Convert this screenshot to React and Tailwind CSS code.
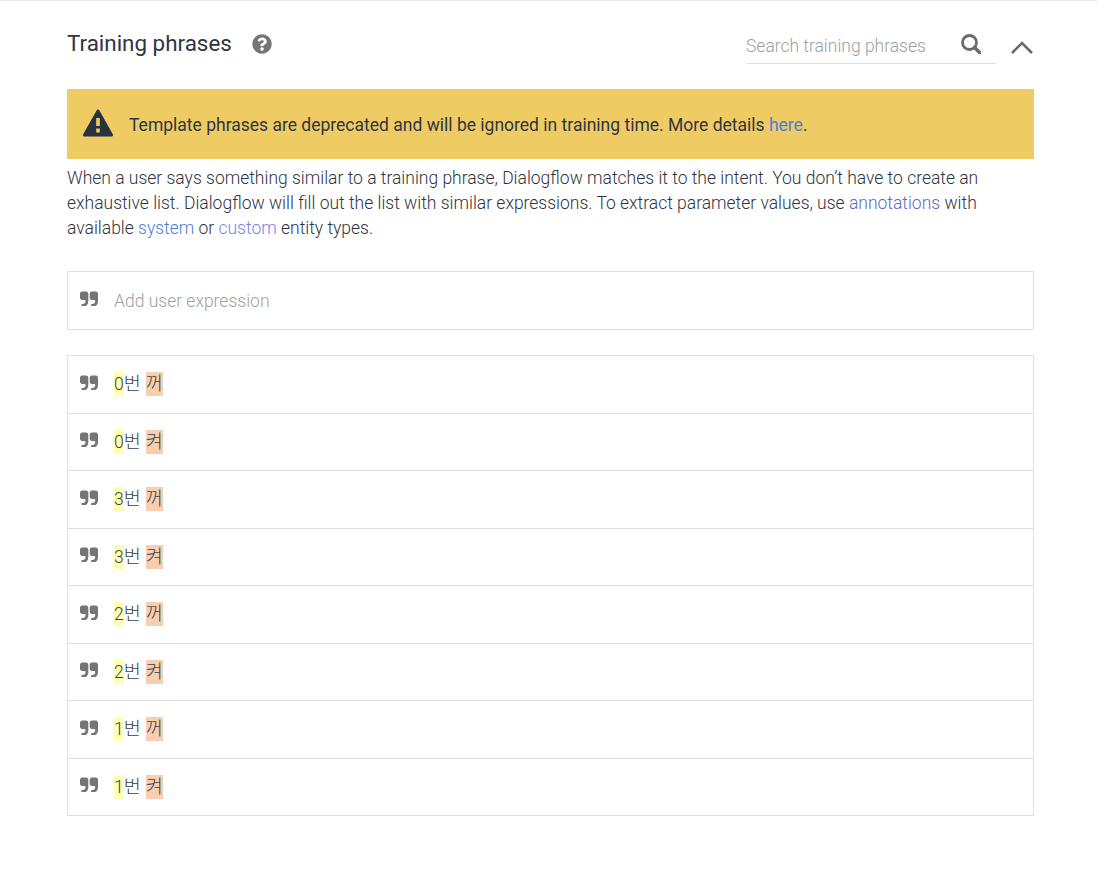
import React from 'react';
import { FaQuestionCircle } from 'react-icons/fa';

const phrases = [
    ['0', '꺼'],
    ['0', '켜'],
    ['3', '꺼'],
    ['3', '켜'],
    ['2', '꺼'],
    ['2', '켜'],
    ['1', '꺼'],
    ['1', '켜'],
];

const QuoteIcon = () => (
    <svg viewBox="0 0 1664 1280" className="w-[18px] h-[15px] -mt-[4px] text-[#757575] fill-current shrink-0">
        <path d="M768 192v704q0 104-40.5 198.5t-109.5 163.5-163.5 109.5-198.5 40.5h-64q-26 0-45-19t-19-45v-128q0-26 19-45t45-19h64q106 0 181-75t75-181v-32q0-40-28-68t-68-28h-224q-80 0-136-56t-56-136v-384q0-80 56-136t136-56h384q80 0 136 56t56 136zM1664 192v704q0 104-40.5 198.5t-109.5 163.5-163.5 109.5-198.5 40.5h-64q-26 0-45-19t-19-45v-128q0-26 19-45t45-19h64q106 0 181-75t75-181v-32q0-40-28-68t-68-28h-224q-80 0-136-56t-56-136v-384q0-80 56-136t136-56h384q80 0 136 56t56 136z" />
    </svg>
);

const App = () => {
    return (
        <div className="min-h-[872px] bg-white border-t border-[#e5e5e5] pl-[67px] pr-[63px] font-['Roboto','Noto_Sans_CJK_KR',sans-serif] text-[#383f4a]">
            <div className="flex items-start h-[88px]">
                <h2 className="text-[22.4px] leading-[27px] mt-[29px] font-normal text-[#2f3542]">Training phrases</h2>
                <FaQuestionCircle className="w-5 h-5 ml-5 mt-[33px] text-[#757575]" />
                <div className="ml-auto flex items-start">
                    <div className="w-[250px] h-[34px] mt-[29px] border-b border-[#e0e0e0] flex justify-between">
                        <span className="text-[17.48px] leading-[32px] font-light text-[#9e9e9e]">Search training phrases</span>
                        <svg viewBox="0 0 20 20" className="w-5 h-5 mr-[15px] mt-[4px] text-[#6b6b6b]" fill="none" stroke="currentColor">
                            <circle cx="8.5" cy="8.5" r="7" strokeWidth="2.8" />
                            <path d="M13.5 13.5 L19 19" strokeWidth="3.4" strokeLinecap="round" />
                        </svg>
                    </div>
                    <svg viewBox="0 0 22 14" className="w-[22px] h-[14px] ml-[15px] mr-[1px] mt-[39px] text-[#6b6b6b]" fill="none" stroke="currentColor" strokeWidth="2.6">
                        <path d="M1 13 L11 3 L21 13" />
                    </svg>
                </div>
            </div>

            <div className="h-[70px] bg-[#efcb64] flex items-center pl-[16px]">
                <svg viewBox="0 0 30 28" className="w-[30px] h-[28px] -mt-[2px]">
                    <path d="M15 2 L28.5 26 L1.5 26 Z" fill="#2a3140" stroke="#2a3140" strokeWidth="3" strokeLinejoin="round" />
                    <rect x="13.2" y="9" width="3.6" height="8" fill="#efcb64" />
                    <rect x="13.2" y="19.5" width="3.6" height="4" fill="#efcb64" />
                </svg>
                <p className="ml-[16px] mt-[2px] text-[17.5px] text-[#2f3542]">
                    Template phrases are deprecated and will be ignored in training time. More details <a className="text-[#4a7fdc]">here</a>.
                </p>
            </div>

            <p className="mt-[7px] text-[17.49px] leading-[25px] font-light text-[#2f3542]">
                When a user says something similar to a training phrase, Dialogflow matches it to the intent. You don’t have to create an exhaustive list. Dialogflow will fill out the list with similar expressions. To extract parameter values, use <a className="text-[#5c6bc0]">annotations</a> with available <a className="text-[#4a7fdc]">system</a> or <a className="text-[#7b7fe0]">custom</a> entity types.
            </p>

            <div className="mt-[30px] h-[59px] border border-[#e0e0e0] flex items-center pl-[12px]">
                <QuoteIcon />
                <span className="ml-[16px] mt-[1px] text-[17.5px] font-light text-[#a0a0a0]">Add user expression</span>
            </div>

            <div className="mt-[25px] border-x border-t border-[#e0e0e0]">
                {phrases.map(([num, word], i) => (
                    <div key={i} className="h-[57.5px] flex items-center pl-[12px] border-b border-[#e0e0e0]">
                        <QuoteIcon />
                        <div className="ml-[16px] flex text-[17.5px] leading-[24px] font-light text-[#383f4a]">
                            <span className="h-[24px] bg-[#ffffb3]">{num}</span>
                            <span className="text-[18.5px] w-[22px]">번</span>
                            <span className="h-[24px] text-[18.5px] bg-[#f7cfb0]">{word}</span>
                        </div>
                    </div>
                ))}
            </div>
        </div>
    );
};

export default App;
